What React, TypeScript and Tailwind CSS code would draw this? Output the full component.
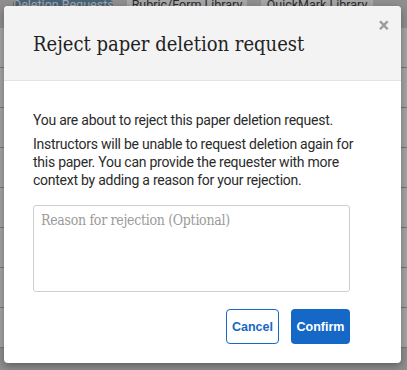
import { useState } from "react"

export default function App() {
  const [reason, setReason] = useState("")

  return (
    <div className="relative w-[407px] h-[370px] overflow-hidden bg-[#dcdcdc] font-['Roboto',sans-serif]">
      {/* Page behind the modal */}
      <div className="flex gap-[14px] pl-[13px] h-[28px]">
        <div className="w-[100px] h-[7px] overflow-hidden whitespace-nowrap bg-[#6e9ab8] text-white text-[12.5px] text-center leading-[10px] rounded-t">Deletion Requests</div>
        <div className="w-[120px] h-[7px] overflow-hidden whitespace-nowrap bg-white text-[#444] text-[12.5px] text-center leading-[10px]">Rubric/Form Library</div>
        <div className="w-[112px] h-[7px] overflow-hidden whitespace-nowrap bg-white text-[#444] text-[12.5px] text-center leading-[10px]">QuickMark Library</div>
      </div>
      <div className="flex flex-col bg-white">
        {[0, 1, 2, 3, 4, 5, 6, 7].map((i) => (
          <div key={i} className="h-[40px] border-b border-[#bbb]" />
        ))}
      </div>

      {/* Backdrop */}
      <div className="absolute inset-0 bg-black/35" />

      {/* Modal */}
      <div className="absolute left-[4px] top-[6px] w-[397px] h-[357px] bg-white rounded-[4px] shadow-[0_3px_8px_rgba(0,0,0,0.35)] flex flex-col overflow-hidden">
        <div className="relative h-[75px] shrink-0 bg-[#f3f3f3] border-b border-[#e3e3e3] flex items-center pl-[29px]">
          <h2 className="text-[20px] text-[#222] font-['DejaVu_Serif_Condensed','DejaVu_Serif',serif] pt-[2px]">
            Reject paper deletion request
          </h2>
          <button className="absolute right-[12px] top-[9px] text-[#9a9a9a] text-[20px] font-bold leading-none">
            ×
          </button>
        </div>

        <div className="flex flex-col px-[29px] pt-[30px] text-[14px] leading-[18px] tracking-[-0.25px] text-[#2b2b2b]">
          <p>You are about to reject this paper deletion request.</p>
          <p className="mt-[6px]">
            Instructors will be unable to request deletion again for this paper. You can provide the requester with more
            context by adding a reason for your rejection.
          </p>
          <textarea
            value={reason}
            onChange={(e) => setReason(e.target.value)}
            placeholder="Reason for rejection (Optional)"
            className="mt-[16px] w-[317px] h-[87px] border border-[#cfcfcf] rounded-[3px] px-[7px] py-[5px] text-[14px] tracking-[-0.3px] font-['DejaVu_Serif_Condensed','DejaVu_Serif',serif] placeholder:text-[#9a9a9a] resize-none focus:outline-none"
          />
          <div className="flex justify-end gap-[12px] mt-[17px] w-[317px] tracking-normal">
            <button className="w-[53px] h-[35px] border-[1.5px] border-[#1668c7] rounded-[4px] text-[#1668c7] text-[12.5px] font-semibold font-['Liberation_Sans',sans-serif]">
              Cancel
            </button>
            <button className="w-[59px] h-[35px] bg-[#1668c7] rounded-[4px] text-white text-[12.5px] font-semibold font-['Liberation_Sans',sans-serif]">
              Confirm
            </button>
          </div>
        </div>
      </div>
    </div>
  )
}
